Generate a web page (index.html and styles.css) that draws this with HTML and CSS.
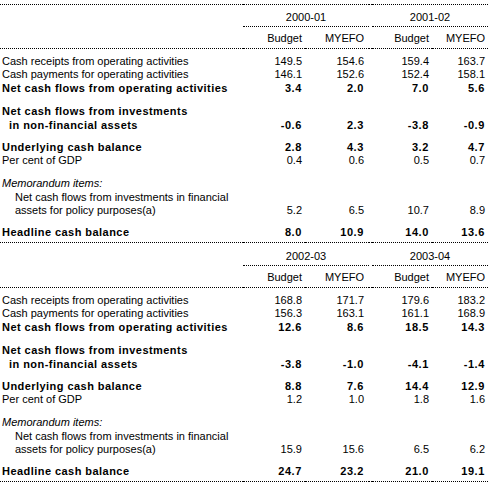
FILE: index.html
```html
<!DOCTYPE html>
<html>
<head>
<meta charset="utf-8">
<title>Cash balances</title>
<link rel="stylesheet" href="styles.css">
</head>
<body>
<table class="cf">
  <colgroup><col class="c-lab"><col class="c-b1"><col class="c-m1"><col class="c-gap"><col class="c-b2"><col class="c-m2"></colgroup>
  <thead>
    <tr class="yr"><th class="lab"></th><th colspan="2" class="grp">2000-01</th><th class="gap"></th><th colspan="2" class="grp">2001-02</th></tr>
    <tr class="sub"><th class="lab"></th><th class="num">Budget</th><th class="num m1">MYEFO</th><th class="gap"></th><th class="num">Budget</th><th class="num">MYEFO</th></tr>
  </thead>
  <tbody>
    <tr class="first"><td class="lab">Cash receipts from operating activities</td><td class="num">149.5</td><td class="num m1">154.6</td><td></td><td class="num">159.4</td><td class="num">163.7</td></tr>
    <tr class="tight"><td class="lab">Cash payments for operating activities</td><td class="num">146.1</td><td class="num m1">152.6</td><td></td><td class="num">152.4</td><td class="num">158.1</td></tr>
    <tr class="b"><td class="lab">Net cash flows from operating activities</td><td class="num">3.4</td><td class="num m1">2.0</td><td></td><td class="num">7.0</td><td class="num">5.6</td></tr>
    <tr class="b sp"><td class="lab">Net cash flows from investments</td><td></td><td></td><td></td><td></td><td></td></tr>
    <tr class="b"><td class="lab ind1">in non-financial assets</td><td class="num">-0.6</td><td class="num m1">2.3</td><td></td><td class="num">-3.8</td><td class="num">-0.9</td></tr>
    <tr class="b sp2"><td class="lab">Underlying cash balance</td><td class="num">2.8</td><td class="num m1">4.3</td><td></td><td class="num">3.2</td><td class="num">4.7</td></tr>
    <tr class="tight"><td class="lab">Per cent of GDP</td><td class="num">0.4</td><td class="num m1">0.6</td><td></td><td class="num">0.5</td><td class="num">0.7</td></tr>
    <tr class="sp"><td class="lab memo">Memorandum items:</td><td></td><td></td><td></td><td></td><td></td></tr>
    <tr><td class="lab ind2">Net cash flows from investments in financial</td><td></td><td></td><td></td><td></td><td></td></tr>
    <tr class="tight"><td class="lab ind2">assets for policy purposes(a)</td><td class="num">5.2</td><td class="num m1">6.5</td><td></td><td class="num">10.7</td><td class="num">8.9</td></tr>
    <tr class="b sp2 last"><td class="lab">Headline cash balance</td><td class="num">8.0</td><td class="num m1">10.9</td><td></td><td class="num">14.0</td><td class="num">13.6</td></tr>
  </tbody>
</table>
<table class="cf">
  <colgroup><col class="c-lab"><col class="c-b1"><col class="c-m1"><col class="c-gap"><col class="c-b2"><col class="c-m2"></colgroup>
  <thead>
    <tr class="yr"><th class="lab"></th><th colspan="2" class="grp">2002-03</th><th class="gap"></th><th colspan="2" class="grp">2003-04</th></tr>
    <tr class="sub"><th class="lab"></th><th class="num">Budget</th><th class="num m1">MYEFO</th><th class="gap"></th><th class="num">Budget</th><th class="num">MYEFO</th></tr>
  </thead>
  <tbody>
    <tr class="first"><td class="lab">Cash receipts from operating activities</td><td class="num">168.8</td><td class="num m1">171.7</td><td></td><td class="num">179.6</td><td class="num">183.2</td></tr>
    <tr class="tight"><td class="lab">Cash payments for operating activities</td><td class="num">156.3</td><td class="num m1">163.1</td><td></td><td class="num">161.1</td><td class="num">168.9</td></tr>
    <tr class="b"><td class="lab">Net cash flows from operating activities</td><td class="num">12.6</td><td class="num m1">8.6</td><td></td><td class="num">18.5</td><td class="num">14.3</td></tr>
    <tr class="b sp"><td class="lab">Net cash flows from investments</td><td></td><td></td><td></td><td></td><td></td></tr>
    <tr class="b"><td class="lab ind1">in non-financial assets</td><td class="num">-3.8</td><td class="num m1">-1.0</td><td></td><td class="num">-4.1</td><td class="num">-1.4</td></tr>
    <tr class="b sp2"><td class="lab">Underlying cash balance</td><td class="num">8.8</td><td class="num m1">7.6</td><td></td><td class="num">14.4</td><td class="num">12.9</td></tr>
    <tr class="tight"><td class="lab">Per cent of GDP</td><td class="num">1.2</td><td class="num m1">1.0</td><td></td><td class="num">1.8</td><td class="num">1.6</td></tr>
    <tr class="sp"><td class="lab memo">Memorandum items:</td><td></td><td></td><td></td><td></td><td></td></tr>
    <tr><td class="lab ind2">Net cash flows from investments in financial</td><td></td><td></td><td></td><td></td><td></td></tr>
    <tr class="tight"><td class="lab ind2">assets for policy purposes(a)</td><td class="num">15.9</td><td class="num m1">15.6</td><td></td><td class="num">6.5</td><td class="num">6.2</td></tr>
    <tr class="b sp2 last"><td class="lab">Headline cash balance</td><td class="num">24.7</td><td class="num m1">23.2</td><td></td><td class="num">21.0</td><td class="num">19.1</td></tr>
  </tbody>
</table>
</body>
</html>
```

FILE: styles.css
```css
html, body {
  margin: 0;
  padding: 0;
  background: #ffffff;
}

body {
  font-family: "Liberation Sans", Arial, sans-serif;
  font-size: 11px;
  color: #000000;
}

.cf {
  width: 488px;
  table-layout: fixed;
  border-collapse: separate;
  border-spacing: 0;
}

.cf:first-child {
  margin-top: 4px;
}

.c-lab { width: 243px; }
.c-b1 { width: 62px; }
.c-m1 { width: 64px; }
.c-gap { width: 3px; }
.c-b2 { width: 60px; }
.c-m2 { width: 56px; }

.cf th,
.cf td {
  padding: 0;
  line-height: 14px;
  height: 14px;
  font-weight: normal;
  white-space: nowrap;
  vertical-align: bottom;
}

.cf .lab {
  text-align: left;
  padding-left: 2px;
}

.cf .num {
  text-align: right;
  padding-right: 3px;
}

.cf .num.m1 {
  padding-right: 5px;
}

.cf .ind1 {
  padding-left: 9px;
}

.cf .ind2 {
  padding-left: 15px;
}

.cf .memo {
  font-style: italic;
}

.cf tr.yr th {
  border-top: 1px dotted #000;
  padding-top: 5px;
  padding-bottom: 2px;
  text-align: center;
}

.cf + .cf tr.yr th {
  border-top: none;
  padding-top: 6px;
}

.cf tr.yr th.grp {
  border-bottom: 1px dotted #000;
}

.cf tr.sub th {
  padding-top: 4px;
  padding-bottom: 3px;
  border-bottom: 1px dotted #000;
}

.cf tr.first td {
  padding-top: 5px;
}

.cf tr.tight td {
  line-height: 13px;
  height: 13px;
}

.cf tr.sp td {
  padding-top: 9px;
}

.cf tr.sp2 td {
  padding-top: 8px;
}

.cf tr.b td {
  font-weight: bold;
}

.cf tr.b td.lab {
  letter-spacing: 0.45px;
}

.cf tr.b td.num {
  letter-spacing: 0.6px;
}

.cf tr.last td {
  padding-bottom: 3px;
  border-bottom: 1px dotted #000;
}
```
